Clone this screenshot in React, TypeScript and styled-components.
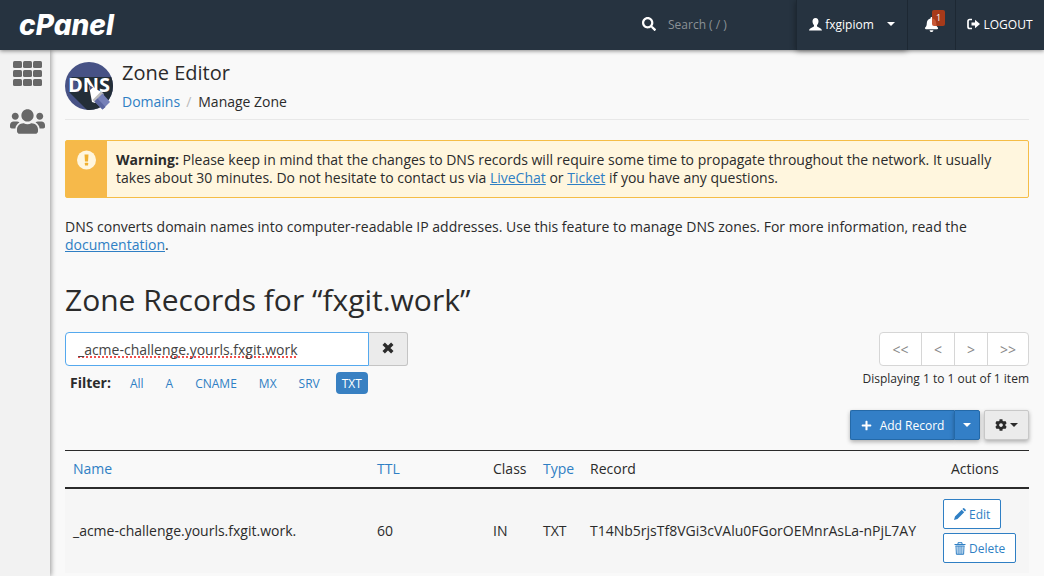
import React from "react";
import styled, { createGlobalStyle } from "styled-components";
import { FaBell, FaCog, FaPlus, FaSearch, FaUsers } from "react-icons/fa";

const GlobalStyle = createGlobalStyle`
  * { box-sizing: border-box; }
  body {
    margin: 0;
    background: #f9f9f9;
    color: #2b2b2b;
    font: 14px/18px "Open Sans", "Noto Sans", sans-serif;
  }
  button, input { font-family: inherit; }
  button { cursor: pointer; }
`;

const Page = styled.div`
  display: flex;
  flex-direction: column;
  min-height: 100vh;
`;

const TopBar = styled.header`
  display: flex;
  align-items: stretch;
  height: 50px;
  background: #263340;
  color: #fff;
  box-shadow: 0 1px 4px rgba(0, 0, 0, 0.45);
  position: relative;
  z-index: 2;
`;

const Brand = styled.a`
  display: flex;
  align-items: center;
  padding-left: 19px;
  color: #fff;
  text-decoration: none;
  font: italic 800 28px/48px Inter, "Open Sans", sans-serif;
`;

const Search = styled.label`
  display: flex;
  align-items: center;
  gap: 12px;
  width: 154px;
  margin-left: auto;
  padding-bottom: 2px;
`;

const SearchInput = styled.input`
  width: 110px;
  padding: 0;
  border: 0;
  outline: 0;
  background: transparent;
  color: #fff;
  font-size: 12px;
  &::placeholder { color: #8b9196; opacity: 1; }
`;

const TopButton = styled.button<{ $width: number; $raised?: boolean }>`
  display: flex;
  align-items: center;
  justify-content: center;
  width: ${(p) => p.$width}px;
  padding: 0 0 2px;
  border: 0;
  border-left: 1px solid #1d2833;
  background: #263340;
  color: #fff;
  font-size: 12px;
  box-shadow: ${(p) => (p.$raised ? "0 1px 6px rgba(0, 0, 0, 0.4)" : "none")};
  gap: 3px;
`;

const Caret = styled.span<{ $gap?: number }>`
  margin-left: ${(p) => p.$gap ?? 0}px;
  border: 4px solid transparent;
  border-top-color: currentColor;
  border-bottom: 0;
`;

const BellWrap = styled.span`
  position: relative;
  display: flex;
`;

const Badge = styled.span`
  position: absolute;
  left: 8px;
  top: -7px;
  width: 13px;
  height: 16px;
  border-radius: 2px;
  background: rgba(190, 60, 20, 0.85);
  font-size: 9px;
  line-height: 15px;
  text-align: center;
`;

const Body = styled.div`
  display: flex;
  flex: 1;
`;

const Sidebar = styled.nav`
  display: flex;
  flex-direction: column;
  align-items: center;
  gap: 18px;
  flex: 0 0 50px;
  padding: 11px 0 0 5px;
  background: #f2f2f2;
  box-shadow: 1px 0 5px rgba(0, 0, 0, 0.4);
`;

const SideLink = styled.a`
  display: flex;
  color: #686868;
`;

const Main = styled.main`
  flex: 1;
  min-width: 0;
  padding: 12px 15px 0;
`;

const PageHeader = styled.div`
  display: flex;
  gap: 9px;
  height: 58px;
  margin-bottom: 20px;
  border-bottom: 1px solid #e8e8e8;
`;

const AppTitle = styled.h1`
  margin: 0 0 7px;
  font-size: 20px;
  line-height: 22px;
  font-weight: 400;
`;

const Crumbs = styled.nav`
  display: flex;
  line-height: 22px;
`;

const Slash = styled.span`
  padding: 0 7px 0 6px;
  color: #bbb;
`;

const Link = styled.a<{ $plain?: boolean }>`
  color: #2f7fc4;
  text-decoration: ${(p) => (p.$plain ? "none" : "underline")};
`;

const Alert = styled.div`
  display: flex;
  margin-bottom: 20px;
  border: 1px solid #f5bd47;
  border-radius: 2px;
  background: #fff6de;
`;

const AlertIcon = styled.div`
  flex: 0 0 41px;
  padding-top: 9px;
  background: #f6b94a;
  text-align: center;
`;

const AlertText = styled.p`
  margin: 0;
  padding: 10px 9px;
`;

const Intro = styled.p`
  margin: 0 0 28px;
`;

const ZoneTitle = styled.h2`
  margin: 0 0 14px;
  font-size: 30px;
  line-height: 36px;
  font-weight: 400;
`;

const Tools = styled.div`
  display: flex;
  justify-content: space-between;
  margin-bottom: 16px;
`;

const FilterBox = styled.div`
  display: flex;
  width: 343px;
`;

const FilterInput = styled.input`
  flex: 1;
  min-width: 0;
  height: 34px;
  padding: 0 12px;
  border: 1px solid #55a9ee;
  border-radius: 4px 0 0 4px;
  outline: 0;
  background: #fff;
  color: #444;
  font-size: 14px;
  text-decoration: underline dotted #f0504c 2px;
  text-decoration-skip-ink: none;
  text-underline-offset: 2px;
`;

const ClearButton = styled.button`
  display: flex;
  align-items: center;
  justify-content: center;
  width: 39px;
  padding: 0 0 2px;
  border: 1px solid #c4c4c4;
  border-left: 0;
  border-radius: 0 3px 3px 0;
  background: #ebebeb;
  color: #2b2b2b;
`;

const Filters = styled.div`
  display: flex;
  align-items: center;
  gap: 10px;
  margin-top: 6px;
  padding-left: 5px;
`;

const FilterName = styled.strong`
  margin-right: 3px;
`;

const Pill = styled.button<{ $active?: boolean }>`
  height: 22px;
  padding: 0 6px;
  border: 0;
  border-radius: 4px;
  background: ${(p) => (p.$active ? "#3880c2" : "transparent")};
  color: ${(p) => (p.$active ? "#fff" : "#2f7fc4")};
  font-size: 12px;
`;

const Paging = styled.div`
  display: flex;
  flex-direction: column;
  align-items: flex-end;
  gap: 4px;
  font-size: 12px;
`;

const Pager = styled.div`
  display: flex;
  border: 1px solid #d6d6d6;
  border-radius: 4px;
  background: #fff;
`;

const PageButton = styled.button<{ $wide?: boolean }>`
  width: ${(p) => (p.$wide ? 41 : 33)}px;
  height: 32px;
  padding: 0;
  border: 0;
  background: transparent;
  color: #888;
  font-size: 14px;
  & + & { border-left: 1px solid #d6d6d6; }
`;

const Actions = styled.div`
  display: flex;
  justify-content: flex-end;
  margin-bottom: 10px;
`;

const PrimaryButton = styled.button<{ $part: "main" | "menu" }>`
  display: flex;
  align-items: center;
  justify-content: center;
  gap: 8px;
  width: ${(p) => (p.$part === "main" ? 104 : 26)}px;
  height: 30px;
  padding: 0;
  border: 1px solid #2469a8;
  border-right-width: ${(p) => (p.$part === "main" ? 0 : 1)}px;
  border-radius: ${(p) => (p.$part === "main" ? "2px 0 0 2px" : "0 2px 2px 0")};
  background: #337fc7;
  color: #fff;
  font-size: 12px;
  box-shadow: 0 2px 4px rgba(0, 0, 0, 0.3);
`;

const GearButton = styled.button`
  display: flex;
  align-items: center;
  justify-content: center;
  gap: 3px;
  width: 45px;
  height: 30px;
  margin-left: 4px;
  padding: 0;
  border: 1px solid #c8c8c8;
  border-radius: 2px;
  background: #ebebeb;
  color: #2b2b2b;
  box-shadow: 0 2px 4px rgba(0, 0, 0, 0.3);
`;

const Table = styled.table`
  width: 100%;
  border-collapse: separate;
  border-spacing: 0;
  table-layout: fixed;
  border-top: 1px solid #2b2b2b;
`;

const HeadCell = styled.th<{ $width?: number; $inset?: boolean }>`
  width: ${(p) => (p.$width ? `${p.$width}px` : "auto")};
  height: 38px;
  padding: 0 0 0 ${(p) => (p.$inset ? 16 : 8)}px;
  border-bottom: 2px solid #2b2b2b;
  font-weight: 400;
  text-align: left;
`;

const Cell = styled.td`
  padding: 10px 0 10px 8px;
  background: #f6f6f6;
  white-space: nowrap;
`;

const RowActions = styled.div`
  display: flex;
  flex-direction: column;
  align-items: flex-start;
  gap: 4px;
`;

const RowButton = styled.button`
  display: flex;
  align-items: center;
  gap: 3px;
  height: 30px;
  padding: 0 10px;
  border: 1px solid #2f7fc4;
  border-radius: 2px;
  background: #fff;
  color: #2f7fc4;
  font-size: 12px;
`;

const GridIcon = () => (
  <svg width="29" height="25" viewBox="0 0 29 25" fill="currentColor">
    {[0, 9, 18].map((y) =>
      [0, 10, 20].map((x) => <rect key={`${x}-${y}`} x={x} y={y} width="9" height="7" rx="1.5" />)
    )}
  </svg>
);

const DnsIcon = () => (
  <svg width="48" height="48" viewBox="0 0 48 48">
    <defs>
      <clipPath id="disc"><circle cx="24" cy="24" r="24" /></clipPath>
    </defs>
    <g clipPath="url(#disc)">
      <rect width="48" height="48" fill="#475285" />
      <path d="M4 30 L22 48 H48 V15 H6 L14 22 V30Z" fill="#232e38" />
    </g>
    <text x="24" y="30" textAnchor="middle" fill="#fff" fontFamily="Open Sans, sans-serif" fontWeight="700" fontSize="20">DNS</text>
    <path d="M24 24 L27 40 L30 41 L38 32 L37 30Z" fill="#fff" />
    <path d="M27.500 38 L36 29.500 L39 32 L30.500 41Z" fill="#bdbcbd" />
    <path d="M29.500 39.500 L37.500 31.500 L45 40 L37.500 47.500Z" fill="#7680b8" />
    <path d="M29.500 39.500 L32.500 36.500 L40.500 45 L37.500 47.500Z" fill="#5a659f" />
    <path d="M24 23 L28 25.500 L25 28Z" fill="#475285" />
  </svg>
);

const UserIcon = () => (
  <svg width="13" height="13" viewBox="0 0 13 13" fill="currentColor">
    <path d="M6.500 0C8.500 0 9.600 1.500 9.500 3.600C9.400 5.400 8.700 6.400 8 7.200V8.300C8.300 9.200 12.500 9.700 13 12.500H0C.5 9.700 4.700 9.200 5 8.300V7.200C4.300 6.400 3.600 5.400 3.500 3.600C3.400 1.500 4.500 0 6.500 0Z" />
  </svg>
);

const LogoutIcon = () => (
  <svg width="13" height="12" viewBox="0 0 13 12" fill="none" stroke="currentColor">
    <path d="M5 1.500H2.800Q1 1.500 1 3.300V8.700Q1 10.500 2.800 10.500H5" strokeWidth="1.700" />
    <path d="M4.500 4.600H8V1.800L13 6L8 10.200V7.400H4.500Z" fill="currentColor" stroke="none" />
  </svg>
);

const WarningIcon = () => (
  <svg width="20" height="20" viewBox="0 0 20 20">
    <circle cx="9.500" cy="10" r="9.500" fill="#fff6de" />
    <path d="M7.500 4.500H11.500L11 11.500H8Z" fill="#f0b030" />
    <rect x="7.900" y="12.800" width="3.200" height="2.600" rx=".5" fill="#f0b030" />
  </svg>
);

const CloseIcon = () => (
  <svg width="12" height="12" viewBox="0 0 12 12" stroke="currentColor" strokeWidth="3.400">
    <path d="M1.700 1.700L10.300 10.300M10.300 1.700L1.700 10.300" />
  </svg>
);

const PencilIcon = () => (
  <svg width="12" height="12" viewBox="0 0 12 12" fill="currentColor">
    <path d="M0 12L1 8.500L7.700 1.800L10.200 4.300L3.500 11ZM8.400 1.100L9.200 .3Q9.700-.1 10.200 .3L11.700 1.800Q12.100 2.300 11.700 2.800L10.900 3.600Z" />
  </svg>
);

const TrashIcon = () => (
  <svg width="12" height="13" viewBox="0 0 12 13" fill="none" stroke="currentColor">
    <path d="M4 2V.7H8V2M.5 2.500H11.500" />
    <path d="M1.500 4H10.500M2 4L2.400 12.300H9.600L10 4M4.100 4V12M6 4V12M7.900 4V12" />
  </svg>
);

const filters = ["All", "A", "CNAME", "MX", "SRV", "TXT"];

export default function App() {
  return (
    <Page>
      <GlobalStyle />
      <TopBar>
        <Brand href="#">cPanel</Brand>
        <Search>
          <FaSearch size={14} />
          <SearchInput aria-label="Search" placeholder="Search ( / )" />
        </Search>
        <TopButton $width={111} $raised>
          <UserIcon />
          fxgipiom
          <Caret $gap={10} />
        </TopButton>
        <TopButton $width={48} aria-label="Notifications">
          <BellWrap>
            <FaBell size={15} />
            <Badge>1</Badge>
          </BellWrap>
        </TopButton>
        <TopButton $width={89}>
          <LogoutIcon />
          LOGOUT
        </TopButton>
      </TopBar>
      <Body>
        <Sidebar>
          <SideLink href="#" aria-label="Tools"><GridIcon /></SideLink>
          <SideLink href="#" aria-label="User manager"><FaUsers size={35} /></SideLink>
        </Sidebar>
        <Main>
          <PageHeader>
            <DnsIcon />
            <div>
              <AppTitle>Zone Editor</AppTitle>
              <Crumbs>
                <Link href="#" $plain>Domains</Link>
                <Slash>/</Slash>
                <span>Manage Zone</span>
              </Crumbs>
            </div>
          </PageHeader>
          <Alert role="alert">
            <AlertIcon><WarningIcon /></AlertIcon>
            <AlertText>
              <strong>Warning:</strong> Please keep in mind that the changes to DNS records will require some time to
              propagate throughout the network. It usually takes about 30 minutes. Do not hesitate to contact us via{" "}
              <Link href="#">LiveChat</Link> or <Link href="#">Ticket</Link> if you have any questions.
            </AlertText>
          </Alert>
          <Intro>
            DNS converts domain names into computer-readable IP addresses. Use this feature to manage DNS zones. For
            more information, read the <Link href="#">documentation</Link>.
          </Intro>
          <ZoneTitle>Zone Records for “fxgit.work”</ZoneTitle>
          <Tools>
            <div>
              <FilterBox>
                <FilterInput aria-label="Filter by name" defaultValue="_acme-challenge.yourls.fxgit.work" spellCheck={false} />
                <ClearButton aria-label="Clear filter"><CloseIcon /></ClearButton>
              </FilterBox>
              <Filters>
                <FilterName>Filter:</FilterName>
                {filters.map((name) => (
                  <Pill key={name} $active={name === "TXT"}>{name}</Pill>
                ))}
              </Filters>
            </div>
            <Paging>
              <Pager>
                <PageButton $wide>&lt;&lt;</PageButton>
                <PageButton>&lt;</PageButton>
                <PageButton>&gt;</PageButton>
                <PageButton $wide>&gt;&gt;</PageButton>
              </Pager>
              <span>Displaying 1 to 1 out of 1 item</span>
            </Paging>
          </Tools>
          <Actions>
            <PrimaryButton $part="main"><FaPlus size={11} />Add Record</PrimaryButton>
            <PrimaryButton $part="menu" aria-label="More record types"><Caret /></PrimaryButton>
            <GearButton aria-label="Settings"><FaCog size={12} /><Caret /></GearButton>
          </Actions>
          <Table>
            <thead>
              <tr>
                <HeadCell $width={304}><Link href="#" $plain>Name</Link></HeadCell>
                <HeadCell $width={116}><Link href="#" $plain>TTL</Link></HeadCell>
                <HeadCell $width={50}>Class</HeadCell>
                <HeadCell $width={47}><Link href="#" $plain>Type</Link></HeadCell>
                <HeadCell>Record</HeadCell>
                <HeadCell $width={94} $inset>Actions</HeadCell>
              </tr>
            </thead>
            <tbody>
              <tr>
                <Cell>_acme-challenge.yourls.fxgit.work.</Cell>
                <Cell>60</Cell>
                <Cell>IN</Cell>
                <Cell>TXT</Cell>
                <Cell>T14Nb5rjsTf8VGi3cVAlu0FGorOEMnrAsLa-nPjL7AY</Cell>
                <Cell>
                  <RowActions>
                    <RowButton><PencilIcon />Edit</RowButton>
                    <RowButton><TrashIcon />Delete</RowButton>
                  </RowActions>
                </Cell>
              </tr>
            </tbody>
          </Table>
        </Main>
      </Body>
    </Page>
  );
}
